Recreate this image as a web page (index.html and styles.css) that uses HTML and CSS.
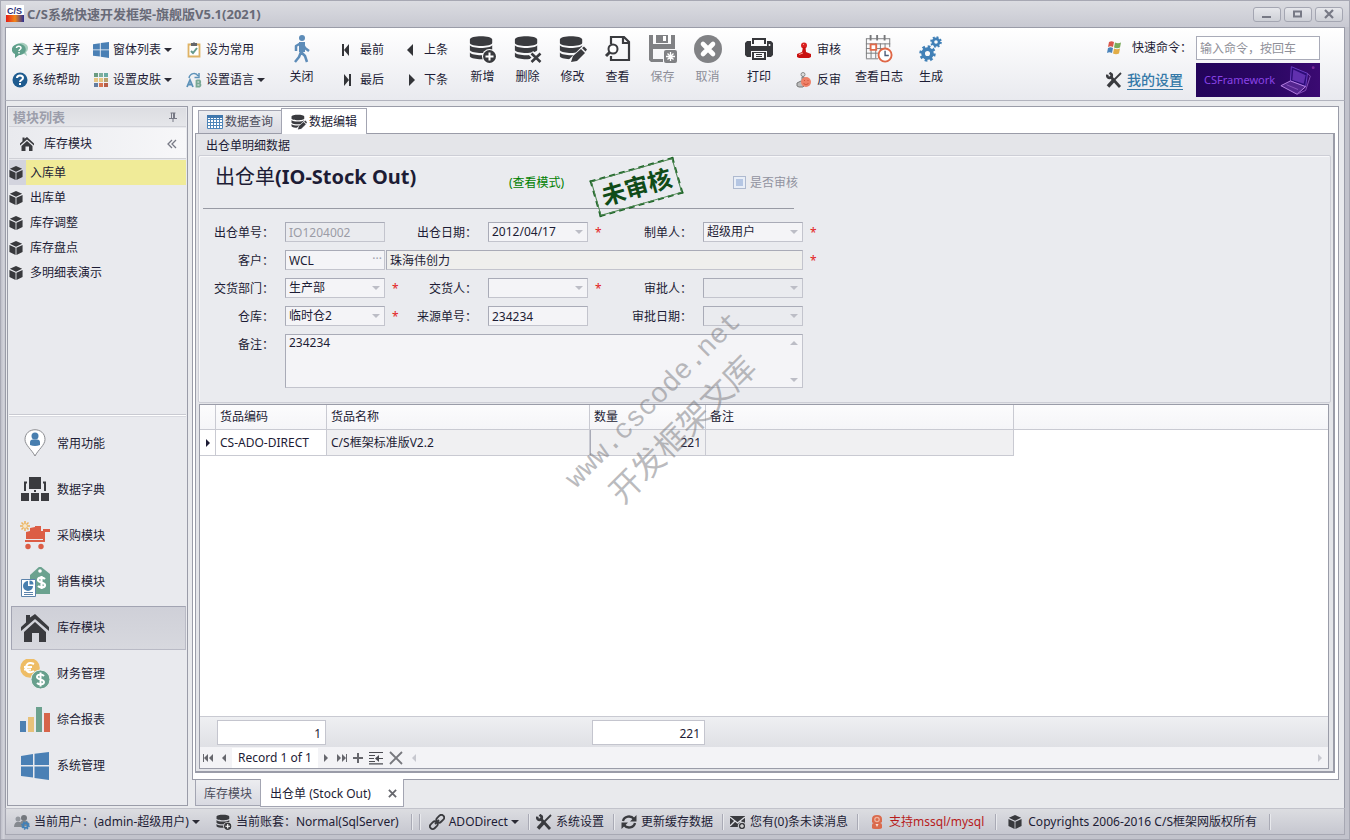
FILE: index.html
```html
<!DOCTYPE html>
<html lang="zh-CN">
<head>
<meta charset="utf-8">
<title>C/S系统快速开发框架-旗舰版V5.1(2021)</title>
<link rel="stylesheet" href="styles.css">
</head>
<body>
<svg class="sprite" aria-hidden="true">
  <symbol id="i-db" viewBox="0 0 28 28"><path fill="#3a3b3f" d="M1 4.500C1 -.5 26 -.5 26 4.500v4C26 13 1 13 1 8.500zM1 11c3 4 22 4 25 0v5.500c-3 4-22 4-25 0zM1 19c3 4 22 4 25 0v4.500c-3 4-22 4-25 0z"/></symbol>
  <symbol id="i-add" viewBox="0 0 28 28"><use href="#i-db" width="25" height="26"/><circle cx="20.500" cy="21.500" r="7.500" fill="#fff"/><circle cx="20.500" cy="21.500" r="6.500" fill="#3a3b3f"/><path stroke="#fff" stroke-width="2" d="M16.500 21.500h8M20.500 17.500v8"/></symbol>
  <symbol id="i-del" viewBox="0 0 28 28"><use href="#i-db" width="25" height="26"/><path stroke="#f8f8fa" stroke-width="6" d="M17 18l9 9M26 18l-9 9"/><path stroke="#3a3b3f" stroke-width="2.600" d="M17.500 18.500l9 8.500M26.500 18.500l-9 8.500"/></symbol>
  <symbol id="i-edit" viewBox="0 0 28 28"><use href="#i-db" width="25" height="26"/><path stroke="#f8f8fa" stroke-width="8" d="M11 29L28 12"/><path fill="#3a3b3f" d="M12 27l2-6 8-7 4 4-8 8zM23 13l2-1.500 3 3-1.500 2z"/></symbol>
  <symbol id="i-view" viewBox="0 0 28 28"><path fill="none" stroke="#3a3b3f" stroke-width="2.200" d="M7 9V2h13l5 5v18H7v-4M19 2v6h6"/><circle cx="9" cy="14" r="4.500" fill="#fff" stroke="#3a3b3f" stroke-width="2"/><path stroke="#3a3b3f" stroke-width="3" d="M6 17l-4 4"/></symbol>
  <symbol id="i-save" viewBox="0 0 28 28"><path fill="#808184" d="M0 0h4v9h18V0h4v14H4v10h10v3H2l-2-2zM7 0h12v8H7z"/><path fill="#fff" d="M14 1h3v5h-3z"/><rect x="15" y="15" width="13" height="13" rx="2" fill="#808184"/><path stroke="#fff" stroke-width="1.300" d="M21.500 17v9M17 21.500h9M18.500 18.500l6 6M24.500 18.500l-6 6"/></symbol>
  <symbol id="i-cancel" viewBox="0 0 28 28"><circle cx="14" cy="14" r="14" fill="#818285"/><path stroke="#fff" stroke-width="4.600" stroke-linecap="round" d="M9 9l10 10M19 9L9 19"/></symbol>
  <symbol id="i-print" viewBox="0 0 28 28"><path fill="#36373b" d="M0 8l2-2h4v5h16V6h4l2 2v12l-2 2h-4v-6H6v6H2l-2-2zM7 3h14v6h-2V5H9v4H7zM7 17h14v8H7zM9 18v5h10v-5z" fill-rule="evenodd"/><path stroke="#36373b" d="M11 19.500h6M11 21.500h6"/><circle cx="24.500" cy="10" r="1" fill="#fff"/></symbol>
  <symbol id="i-walk" viewBox="0 0 20 28"><circle cx="10" cy="3" r="3" fill="#5d8cb8"/><path fill="none" stroke="#5d8cb8" stroke-width="2.500" stroke-linejoin="round" d="M9 8l-5 3v5M10 8l3 5 4 3M9 8v9l4 4 2 6M9 17l-2 5-4 5"/><path fill="#5d8cb8" d="M7 7h6v10H7z"/></symbol>
  <symbol id="i-log" viewBox="0 0 30 30"><path fill="none" stroke="#77787b" d="M1.500 4v21M6.500 9v16M11.500 9v16M16.500 9v7M21.500 9v5M26.500 4v9M1 4h26M1 9.500h26M1 14.500h18M1 19.500h13M1 25.500h13"/><path stroke="#77787b" stroke-width="2" d="M6 0v6M13 0v6M21 0v6"/><path fill="#fff" stroke="#e06a4a" stroke-width="2" d="M6 10h6v6H6z"/><circle cx="21.500" cy="21.500" r="7" fill="#fff" stroke="#df6646" stroke-width="2"/><path fill="none" stroke="#4b5e7a" stroke-width="1.500" d="M21.500 17v5h4"/></symbol>
  <symbol id="i-gear" viewBox="0 0 20 20"><circle cx="10" cy="10" r="5.200" fill="none" stroke="#4180b7" stroke-width="4.400"/><circle cx="10" cy="10" r="8" fill="none" stroke="#4180b7" stroke-width="3.400" stroke-dasharray="3.140"/></symbol>
  <symbol id="i-gears" viewBox="0 0 24 28"><use href="#i-gear" x="0" y="10" width="17" height="17"/><use href="#i-gear" x="11" y="1" width="12" height="12"/></symbol>
  <symbol id="i-stamp" viewBox="0 0 16 16"><circle cx="8" cy="3.500" r="3" fill="#d92121"/><path fill="#c91111" d="M7 5h2.500l.5 5 5 2v3l-2 1H3l-2-1v-3l5-2z"/><path stroke="#ff9b8a" d="M3 12.500l4-1.500M7 2.500h1"/></symbol>
  <symbol id="i-unstamp" viewBox="0 0 16 16"><circle cx="7" cy="2.500" r="2" fill="#ddd" stroke="#8b8b8b"/><path fill="#bbb" stroke="#777" d="M6 5h2v4H6zM1 11l4-2 4 4-2 2H3l-2-1z"/><circle cx="10" cy="10" r="5" fill="#ee8067"/><path fill="none" stroke="#cf5037" d="M7.500 11c1 2 4 2 5 0M8 8.500h1M11.500 8.500h1"/></symbol>
  <symbol id="i-about" viewBox="0 0 16 16"><path fill="#a5cdbd" d="M4 3c3-4 12-2 12 3 0 3-2 4-2 4l1 4-4-3z"/><path fill="#5f9f8b" d="M7 2c9 0 9 11 0 11l-4 3V12C-3 9 0 2 7 2z"/><path fill="none" stroke="#fff" stroke-width="1.500" d="M4.500 6c0-2.500 4.500-2.500 4.500 0 0 1.500-2 1.500-2 3M7 10v1.500"/></symbol>
  <symbol id="i-help" viewBox="0 0 16 16"><circle cx="8" cy="8" r="7.500" fill="#1f5c90"/><path fill="none" stroke="#fff" stroke-width="2" d="M5 6c0-3.500 6-3.500 6 0 0 2-3 2-3 4M8 11v2"/></symbol>
  <symbol id="i-win" viewBox="0 0 28 28"><path fill="#4a80b5" d="M0 4l12-2v11H0zM13.500 1.800L28 0v13H13.500zM0 14.500h12v11L0 24zM13.500 14.500H28V28l-14.500-2z"/></symbol>
  <symbol id="i-skin" viewBox="0 0 16 16"><path fill="#6a9b80" d="M1 1h4v4H1z"/><path fill="#7eaf9d" d="M6 1h4v4H6z"/><path fill="#69aaa2" d="M11 1h4v4h-4z"/><path fill="#e5c581" d="M1 6h4v4H1zM6 6h4v4H6z"/><path fill="#b8a26c" d="M11 6h4v4h-4z"/><path fill="#627ca0" d="M1 11h4v4H1z"/><path fill="#d8734f" d="M6 11h4v4H6z"/><path fill="#b75e48" d="M11 11h4v4h-4z"/></symbol>
  <symbol id="i-clip" viewBox="0 0 16 16"><path fill="#fff" stroke="#dfb365" stroke-width="1.800" d="M2.500 2.500h11v12h-11z"/><path fill="#65666a" d="M5 1h2l1-1 1 1h2v3H5z"/><path fill="none" stroke="#65998c" stroke-width="2" d="M5 9l2 2 4-5"/></symbol>
  <symbol id="i-lang" viewBox="0 0 16 16"><path fill="none" stroke="#5c91b8" stroke-width="1.800" d="M1 15L4 8l3 7M2 12.500h4"/><path fill="none" stroke="#78a894" stroke-width="1.800" d="M10.500 8v6.500h3q2-1.500 0-3h-3M10.500 8.500h3q1.500 1.500 0 3"/><path fill="none" stroke="#5c91b8" stroke-width="1.500" d="M3 6c1-5 7-6 9-2M13 1v4.500H8.500"/></symbol>
  <symbol id="i-flag" viewBox="0 0 16 16"><path fill="#d9574b" d="M3 2c2-1 3-1 5 0L7 7C5 6 4 6 2 7z"/><path fill="#7aab5a" d="M9 2.500c2 1 4 1 6 0l-1 5c-2 1-4 1-6 0z"/><path fill="#4a83ba" d="M2 8c2-1 3-1 5 0l-1 5c-2-1-3-1-5 0z"/><path fill="#e2ad47" d="M8 8.500c2 1 4 1 6 0l-1 5c-2 1-4 1-6 0z"/></symbol>
  <symbol id="i-tools" viewBox="0 0 16 16"><path stroke="#3a3b3f" stroke-width="2.800" d="M4 4l10 11"/><path fill="none" stroke="#3a3b3f" stroke-width="2.600" d="M1.200 2.500c-.5 5 5.500 4.500 4.500 0L3.500.8"/><path stroke="#3a3b3f" stroke-width="1.800" d="M15 1L7 9"/><path stroke="#3a3b3f" stroke-width="3.500" d="M7.500 8.500L2 14.500"/></symbol>
  <symbol id="i-home" viewBox="0 0 28 28"><path fill="#3a3b3f" d="M5 6V1h4v2.500L14 0l14 13v4L14 5 0 17v-4l5-4.500zM3 18L14 8l11 10v10h-7v-9h-7v9H3z"/></symbol>
  <symbol id="i-cube" viewBox="0 0 16 16"><path fill="#38393d" d="M8 0l7 3-7 3.500L1 3zM.5 4.500l7 3.300V16l-7-3.500zM8.500 7.800l7-3.300v8l-7 3.500z"/></symbol>
  <symbol id="i-pin" viewBox="0 0 10 10"><path fill="none" stroke="#777985" d="M2.500 1h5M3.500 1v5M1 6.500h8M5 6v4"/><path fill="#777985" d="M5 1h2v5H5z"/></symbol>
  <symbol id="i-place" viewBox="0 0 30 30"><path fill="#fff" stroke="#8b8c90" d="M15 27C12 21 5 16 5 10.500c0-13 20-13 20 0C25 16 18 21 15 27z"/><circle cx="15" cy="7" r="3.500" fill="#487eaf"/><path fill="#487eaf" d="M10 16v-2.500q0-3 3-3h4q3 0 3 3V16q-5 2-10 0z"/></symbol>
  <symbol id="i-tree" viewBox="0 0 30 30"><path fill="#3a3b3f" d="M9 2h12v12H9zM1 18h8v8H1zM11 18h8v8h-8zM21 18h8v8h-8z"/><path fill="none" stroke="#3a3b3f" stroke-width="2" d="M7 7.500H5V16M23 7.500h2V16M15 15v2"/></symbol>
  <symbol id="i-cart" viewBox="0 0 30 30"><path fill="#dc5d45" d="M6 11l4-1V7l5-1V5h6v5h2V8h7v3h-5v10H5v-2h18v-1H6z"/><path stroke="#edb35b" stroke-width="1.500" d="M5 0v10M0 5h10M1.500 1.500l7 7M8.500 1.500l-7 7"/><circle cx="5" cy="5" r="2" fill="#f5e7cc"/><circle cx="8" cy="25.500" r="2.700" fill="#dc5d45"/><circle cx="21" cy="25.500" r="2.700" fill="#dc5d45"/></symbol>
  <symbol id="i-sale" viewBox="0 0 30 30"><path fill="#6ba28f" d="M10 8L20-1l10 8v20H10z"/><circle cx="20" cy="4" r="1.800" fill="#fff"/><path fill="none" stroke="#fff" stroke-width="2.200" d="M25 12c-2-2-7-2-7 1s7 2 7 5-5 3-7 1M21.500 9v13"/><path fill="#fff" stroke="#5c83ab" d="M1.500 12.500h14v17h-14z"/><path fill="#477eae" d="M8 14v5h5a5 5 0 1 1-5-5zM9.500 13.500q4 0 4 4h-4z"/><path stroke="#5c83ab" d="M4 25.500h9M4 27.500h9"/></symbol>
  <symbol id="i-coins" viewBox="0 0 30 30"><circle cx="10" cy="9" r="9.800" fill="#eebd66"/><path fill="none" stroke="#fff" stroke-width="2" d="M14 5c-6-3-8 1-8 4s3 6 8 3M4 8h8M4 10.500h7"/><circle cx="20.500" cy="20.500" r="9.500" fill="#68a08d" stroke="#edf0ef"/><path fill="none" stroke="#fff" stroke-width="2" d="M24 17c-2-2-7-2-7 1s7 2 7 5-5 3-7 1M20.500 13.500v14"/></symbol>
  <symbol id="i-bars" viewBox="0 0 30 30"><path fill="#4c80b2" d="M0 16h6v11H0z"/><path fill="#e7c17a" d="M8 12h6v15H8z"/><path fill="#6ba18e" d="M16 2h6v25h-6z"/><path fill="#d7654a" d="M24 8h6v19h-6z"/></symbol>
  <symbol id="i-table" viewBox="0 0 16 14"><path fill="#fff" stroke="#4f86b9" d="M.5.500h15v13H.5zM.5 4.500h15M.5 7.500h15M.5 10.500h15M3.500 3v10M6.500 3v10M9.500 3v10M12.500 3v10"/><path fill="#3f77ad" d="M0 0h16v3H0z"/></symbol>
  <symbol id="i-users" viewBox="0 0 16 16"><circle cx="4" cy="5" r="2.500" fill="#94989e"/><circle cx="10" cy="4" r="3" fill="#73777d"/><path fill="#85898f" d="M0 13c0-7 8-7 9 0zM6 9c1-4 9-3 9 1v2H8z"/><use href="#i-gear" x="7" y="7" width="9" height="9"/></symbol>
  <symbol id="i-link" viewBox="0 0 16 16"><g fill="none" stroke="#3a3b3f" stroke-width="1.800"><rect x="7" y="2" width="8.500" height="5.500" rx="2.700" transform="rotate(-45 11.200 4.700)"/><rect x=".5" y="8.500" width="8.500" height="5.500" rx="2.700" transform="rotate(-45 4.700 11.200)"/><path d="M6 10l4-4"/></g></symbol>
  <symbol id="i-refresh" viewBox="0 0 16 16"><path fill="none" stroke="#3a3b3f" stroke-width="2.300" d="M2 7c1-5 8-6 11-2M14 9c-1 5-8 6-11 2"/><path fill="#3a3b3f" d="M15.500 1v6.500H9zM.5 15V8.500H7z"/></symbol>
  <symbol id="i-mail" viewBox="0 0 16 16"><path fill="#3a3b3f" d="M0 2h15v11H0z"/><path fill="none" stroke="#dedfe4" stroke-width="1.300" d="M0 3l7.500 6L15 3M0 12l5-5M15 12l-5-5"/><circle cx="12" cy="12" r="3.800" fill="#3a3b3f" stroke="#dedfe4"/><path stroke="#fff" d="M10 12h4M12 10v4"/></symbol>
  <symbol id="i-person" viewBox="0 0 16 16"><path fill="#da6a4c" d="M3 5q0-4 5-4t5 4v3q-1 1-2 1 2 0 2 2v3q-1 1-3 1H6q-3 0-3-1v-3q0-2 2-2-2 0-2-1z"/><circle cx="8" cy="5.500" r="2.800" fill="#f0b49f"/><circle cx="8" cy="5.500" r="1.500" fill="#da6a4c"/><path fill="#f8ddd2" d="M6.500 10h3L8 13z"/></symbol>
</svg>
<div class="window">
  <header class="titlebar">
    <svg class="logo" viewBox="0 0 18 18"><path fill="#fff" d="M0 0h18v10H0z"/><path fill="url(#lg)" d="M0 10h18v7H0z"/><defs><linearGradient id="lg"><stop stop-color="#e51c16"/><stop offset=".5" stop-color="#f28618"/><stop offset="1" stop-color="#272f96"/></linearGradient></defs><text x="1" y="9" class="logo-text">C/S</text></svg>
    <h1 class="app-title">C/S系统快速开发框架-旗舰版V5.1(2021)</h1>
    <div class="win-buttons">
      <button type="button" aria-label="最小化"><svg viewBox="0 0 12 10"><path stroke="#777985" stroke-width="2" d="M1 8h9"/></svg></button>
      <button type="button" aria-label="最大化"><svg viewBox="0 0 12 10"><path fill="none" stroke="#777985" stroke-width="2" d="M2 2.500h7v5H2z"/></svg></button>
      <button type="button" aria-label="关闭窗口"><svg viewBox="0 0 12 10"><path stroke="#777985" stroke-width="2.200" d="M2 1l8 8M10 1L2 9"/></svg></button>
    </div>
  </header>

  <nav class="ribbon">
    <div class="pair pair-a">
      <button type="button"><svg class="ico16"><use href="#i-about"/></svg>关于程序</button>
      <button type="button"><svg class="ico16"><use href="#i-help"/></svg>系统帮助</button>
    </div>
    <div class="pair pair-b">
      <button type="button"><svg class="ico16"><use href="#i-win"/></svg>窗体列表<i class="caret"></i></button>
      <button type="button"><svg class="ico16"><use href="#i-skin"/></svg>设置皮肤<i class="caret"></i></button>
    </div>
    <div class="pair pair-b">
      <button type="button"><svg class="ico16"><use href="#i-clip"/></svg>设为常用</button>
      <button type="button"><svg class="ico16"><use href="#i-lang"/></svg>设置语言<i class="caret"></i></button>
    </div>
    <button type="button" class="big"><svg class="ico28"><use href="#i-walk"/></svg>关闭</button>
    <div class="pair pair-nav">
      <button type="button"><svg class="ico12" viewBox="0 0 12 12"><path fill="#333438" d="M1 0h2v12H1zM8 0v12L3 6z"/></svg>最前</button>
      <button type="button"><svg class="ico12" viewBox="0 0 12 12"><path fill="#333438" d="M8 0h2v12H8zM3 0v12l5-6z"/></svg>最后</button>
    </div>
    <div class="pair pair-step">
      <button type="button"><svg class="ico12" viewBox="0 0 12 12"><path fill="#333438" d="M8 0v12L2 6z"/></svg>上条</button>
      <button type="button"><svg class="ico12" viewBox="0 0 12 12"><path fill="#333438" d="M4 0v12l6-6z"/></svg>下条</button>
    </div>
    <button type="button" class="big"><svg class="ico28"><use href="#i-add"/></svg>新增</button>
    <button type="button" class="big"><svg class="ico28"><use href="#i-del"/></svg>删除</button>
    <button type="button" class="big"><svg class="ico28"><use href="#i-edit"/></svg>修改</button>
    <button type="button" class="big"><svg class="ico28"><use href="#i-view"/></svg>查看</button>
    <button type="button" class="big" disabled><svg class="ico28"><use href="#i-save"/></svg>保存</button>
    <button type="button" class="big" disabled><svg class="ico28"><use href="#i-cancel"/></svg>取消</button>
    <button type="button" class="big print"><svg class="ico28"><use href="#i-print"/></svg>打印</button>
    <div class="pair pair-audit">
      <button type="button"><svg class="ico16"><use href="#i-stamp"/></svg>审核</button>
      <button type="button"><svg class="ico16"><use href="#i-unstamp"/></svg>反审</button>
    </div>
    <button type="button" class="big log"><svg class="ico28"><use href="#i-log"/></svg>查看日志</button>
    <button type="button" class="big gen"><svg class="ico28"><use href="#i-gears"/></svg>生成</button>
    <div class="quick">
      <svg class="ico16"><use href="#i-flag"/></svg>
      <label for="cmd">快速命令：</label>
      <input id="cmd" type="text" placeholder="输入命令，按回车">
      <svg class="ico16"><use href="#i-tools"/></svg>
      <a href="#settings">我的设置</a>
      <div class="banner"><span>CSFramework</span>
        <svg viewBox="0 0 40 34"><path fill="#2d0c78" stroke="#6c3fc4" d="M13 3l17 7-2 14-16-6z"/><path fill="#6130ae" d="M15 6l13 6-2 9-12-4z"/><path fill="#54268f" stroke="#bb84e6" d="M12 18l16 6-9 8L2 23z"/><path stroke="#8751bb" d="M8 22l12 5"/><path fill="none" stroke="#8751bb" d="M30 10l3 3-5 15-9 4"/><circle cx="36" cy="4" r="1.500" fill="#782b98"/></svg>
      </div>
    </div>
  </nav>

  <div class="main">
    <aside class="sidebar">
      <h2 class="side-title">模块列表<svg class="pin"><use href="#i-pin"/></svg></h2>
      <div class="side-head"><svg><use href="#i-home"/></svg><span>库存模块</span><svg class="fold" viewBox="0 0 10 10"><path fill="none" stroke="#777985" stroke-width="1.300" d="M5 1L1 5l4 4M9 1L5 5l4 4"/></svg></div>
      <ul class="side-list">
        <li class="on"><a href="#in"><svg class="ico14"><use href="#i-cube"/></svg><span>入库单</span></a></li>
        <li><a href="#out"><svg class="ico14"><use href="#i-cube"/></svg><span>出库单</span></a></li>
        <li><a href="#adj"><svg class="ico14"><use href="#i-cube"/></svg><span>库存调整</span></a></li>
        <li><a href="#check"><svg class="ico14"><use href="#i-cube"/></svg><span>库存盘点</span></a></li>
        <li><a href="#demo"><svg class="ico14"><use href="#i-cube"/></svg><span>多明细表演示</span></a></li>
      </ul>
      <div class="side-nav">
        <button type="button"><svg><use href="#i-place"/></svg>常用功能</button>
        <button type="button"><svg><use href="#i-tree"/></svg>数据字典</button>
        <button type="button"><svg><use href="#i-cart"/></svg>采购模块</button>
        <button type="button"><svg><use href="#i-sale"/></svg>销售模块</button>
        <button type="button" class="on"><svg class="inset"><use href="#i-home"/></svg>库存模块</button>
        <button type="button"><svg><use href="#i-coins"/></svg>财务管理</button>
        <button type="button"><svg><use href="#i-bars"/></svg>综合报表</button>
        <button type="button"><svg class="inset"><use href="#i-win"/></svg>系统管理</button>
      </div>
    </aside>

    <div class="work">
      <div class="doc">
        <div class="tabs">
          <button type="button"><svg class="ico16"><use href="#i-table"/></svg>数据查询</button>
          <button type="button" class="on"><svg class="ico16"><use href="#i-edit"/></svg>数据编辑</button>
        </div>
        <section class="panel">
          <h2 class="caption">出仓单明细数据</h2>
          <form class="form">
            <div class="form-head">
              <h2><span>出仓单</span>(IO-Stock Out)</h2>
              <span class="mode">(查看模式)</span>
              <label class="audited"><input type="checkbox" disabled>是否审核</label>
              <div class="stamp">未审核</div>
            </div>
            <div class="fields">
              <label for="f1">出仓单号：</label><input id="f1" value="IO1204002" disabled><span></span>
              <label for="f2">出仓日期：</label><div class="combo"><select id="f2"><option>2012/04/17</option></select></div><span class="req">*</span>
              <label for="f3">制单人：</label><div class="combo"><select id="f3"><option>超级用户</option></select></div><span class="req">*</span>

              <label for="f4">客户：</label><div class="dots"><input id="f4" value="WCL"></div>
              <input class="wide" aria-label="客户名称" value="珠海伟创力" readonly><span class="req">*</span>

              <label for="f5">交货部门：</label><div class="combo"><select id="f5"><option>生产部</option></select></div><span class="req">*</span>
              <label for="f6">交货人：</label><div class="combo"><select id="f6"><option></option></select></div><span class="req">*</span>
              <label for="f7">审批人：</label><div class="combo"><select id="f7" disabled><option></option></select></div><span></span>

              <label for="f8">仓库：</label><div class="combo"><select id="f8"><option>临时仓2</option></select></div><span class="req">*</span>
              <label for="f9">来源单号：</label><input id="f9" value="234234"><span></span>
              <label for="f10">审批日期：</label><div class="combo"><select id="f10" disabled><option></option></select></div><span></span>

              <label for="f11">备注：</label><div class="memo"><textarea id="f11">234234</textarea></div>
            </div>
          </form>

          <div class="grid">
            <div class="grid-body">
              <table>
                <colgroup><col class="c0"><col class="c1"><col class="c2"><col class="c3"><col class="c4"><col></colgroup>
                <thead><tr><th></th><th>货品编码</th><th>货品名称</th><th>数量</th><th>备注</th><th></th></tr></thead>
                <tbody><tr><td><i class="rowmark"></i></td><td>CS-ADO-DIRECT</td><td class="g">C/S框架标准版V2.2</td><td class="g num">221</td><td class="g"></td><td class="fill"></td></tr></tbody>
              </table>
            </div>
            <div class="summary"><output class="s1">1</output><output class="s2">221</output></div>
            <div class="navigator">
              <button type="button" aria-label="首条"><svg viewBox="0 0 12 12"><path fill="#66676d" d="M1 2h1v8H1zM6 2v8L2 6zM11 2v8L7 6z"/></svg></button>
              <button type="button" aria-label="上一条"><svg viewBox="0 0 12 12"><path fill="#66676d" d="M8 2v8L4 6z"/></svg></button>
              <span>Record 1 of 1</span>
              <button type="button" aria-label="下一条"><svg viewBox="0 0 12 12"><path fill="#66676d" d="M4 2v8l4-4z"/></svg></button>
              <button type="button" aria-label="末条"><svg viewBox="0 0 12 12"><path fill="#66676d" d="M10 2h1v8h-1zM1 2v8l4-4zM6 2v8l4-4z"/></svg></button>
              <button type="button" aria-label="追加"><svg viewBox="0 0 12 12"><path stroke="#66676d" stroke-width="2" d="M1 6h10M6 1v10"/></svg></button>
              <button type="button" class="w" aria-label="插入"><svg viewBox="0 0 16 14"><path stroke="#4b4c52" stroke-width="1.200" d="M1 1.500h14M1 4.500h6M1 7.500h5M1 10.500h6M1 12.800h14M9 7.500h6"/><path fill="#4b4c52" d="M11 4v7L7 7.500z"/></svg></button>
              <button type="button" class="w" aria-label="删除行"><svg viewBox="0 0 16 14"><path stroke="#77787d" stroke-width="1.800" d="M2 1l12 12M14 1L2 13"/></svg></button>
              <i class="sb l"></i><i class="sb r"></i>
            </div>
          </div>
        </section>
        <div class="watermark"><span class="site">www.cscode.net</span><span>开发框架文库</span></div>
      </div>
      <div class="doc-tabs">
        <button type="button">库存模块</button>
        <button type="button" class="on">出仓单 (Stock Out)<svg viewBox="0 0 10 10"><path stroke="#66676d" stroke-width="2" d="M1 1l8 8M9 1L1 9"/></svg></button>
      </div>
    </div>
  </div>

  <footer class="status">
    <button type="button" class="st-user"><svg class="ico16"><use href="#i-users"/></svg>当前用户：(admin-超级用户)<i class="caret"></i></button>
    <span class="st-db"><svg class="ico16"><use href="#i-add"/></svg>当前账套：Normal(SqlServer)</span>
    <span class="sep bare"></span>
    <button type="button" class="sep next"><svg class="ico16"><use href="#i-link"/></svg>ADODirect<i class="caret"></i></button>
    <button type="button" class="sep"><svg class="ico16"><use href="#i-tools"/></svg>系统设置</button>
    <button type="button" class="sep"><svg class="ico16"><use href="#i-refresh"/></svg>更新缓存数据</button>
    <button type="button" class="sep"><svg class="ico16"><use href="#i-mail"/></svg>您有(0)条未读消息</button>
    <span class="sep red"><svg class="ico16"><use href="#i-person"/></svg>支持mssql/mysql</span>
    <span class="sep copy"><svg class="ico14"><use href="#i-cube"/></svg>Copyrights 2006-2016 C/S框架网版权所有</span>
    <span class="sep bare"></span>
  </footer>
</div>
</body>
</html>
```

FILE: styles.css
```css
* { box-sizing: border-box; }
body {
  margin: 0;
  color: #1d1c35;
  font: 12px/16px "Noto Sans", "Noto Sans CJK SC", sans-serif;
  background: #e9eaed;
}
button, input, select, textarea { font: inherit; color: inherit; }
button { display: flex; align-items: center; padding: 0; border: 0; background: none; white-space: nowrap; }
h1, h2, ul { margin: 0; padding: 0; list-style: none; font-size: 12px; font-weight: normal; }
svg { display: block; flex: none; }
a { color: inherit; text-decoration: none; }
.sprite { position: absolute; width: 0; height: 0; }
.ico12 { width: 12px; height: 12px; }
.ico14 { width: 14px; height: 14px; }
.ico16 { width: 16px; height: 16px; }
.ico28 { width: 28px; height: 28px; }
.caret { width: 0; border: 4px solid transparent; border-top-color: #2b2b35; border-bottom: 0; }

.window {
  display: flex;
  flex-direction: column;
  min-height: 100vh;
  padding: 0 4px 4px;
  background: linear-gradient(90deg, #bfc0ca 0, #d4d5dc 3px, #c2c3cc 4px);
  border: 1px solid #a7a8b3;
}

/* title bar */
.titlebar {
  display: flex;
  align-items: center;
  gap: 3px;
  height: 26px;
  margin: 0 -4px;
  padding: 0 6px 0 5px;
  background: linear-gradient(#dbdce1, #c8c9d2);
}
.logo { width: 18px; height: 18px; }
.logo-text { font: bold 9px "Liberation Sans", sans-serif; fill: #2c3177; }
.app-title { flex: 1; color: #686a77; font-size: 13px; font-weight: bold; }
.win-buttons { display: flex; gap: 3px; }
.win-buttons button {
  justify-content: center;
  width: 28px;
  height: 15px;
  border: 1px solid #a4a6b2;
  border-radius: 3px;
  background: linear-gradient(#e6e7eb, #ced0d7);
}
.win-buttons svg { width: 12px; height: 10px; }

/* ribbon */
.ribbon {
  display: flex;
  height: 74px;
  padding: 7px 24px 0 6px;
  border: 1px solid #9a9ca8;
  border-bottom-color: #b2b4be;
  background: linear-gradient(#fff, #e9eaef);
}
.pair { display: flex; flex-direction: column; flex: none; }
.pair button { height: 30px; gap: 4px; }
.pair .caret { margin-left: -1px; }
.pair-a { width: 81px; }
.pair-b { width: 93px; }
.pair-nav { width: 81px; padding-left: 17px; }
.pair-nav button, .pair-step button { gap: 7px; }
.pair-step { width: 55px; }
.pair-audit { width: 58px; padding-left: 8px; }
.pair-audit button { gap: 5px; }
.big { flex: none; flex-direction: column; width: 45px; height: 52px; gap: 6px; }
.big:disabled { color: #8d8e97; }
.print { width: 58px; }
.log { width: 66px; }
.gen { width: 38px; }
.quick {
  display: grid;
  grid-template-columns: 21px 69px 124px;
  grid-template-rows: 26px 34px;
  gap: 2px 0;
  align-items: center;
  margin-left: auto;
}
.quick label { padding-left: 5px; }
.quick input { width: 100%; height: 24px; padding: 0 3px; border: 1px solid #a9abb8; background: #fff; }
.quick input::placeholder { color: #8f9099; opacity: 1; }
.quick a { justify-self: start; color: #3579a8; font-size: 14px; font-weight: 500; line-height: 18px; border-bottom: 1px solid #3579a8; }
.banner { display: flex; align-items: center; justify-content: space-between; height: 34px; padding: 0 3px 0 8px; color: #8a43e6; font-size: 11px; background: linear-gradient(90deg, #23045a, #2b0763 60%, #3b0a72); }
.banner svg { width: 38px; height: 34px; }

/* layout */
.main { display: flex; flex: 1; gap: 4px; padding: 5px 5px 2px 1px; background: #e9eaed; border: 1px solid #9a9ca8; border-width: 0 1px; }
.sidebar { display: flex; flex-direction: column; flex: none; width: 181px; padding: 1px; background: #e9eaee; border: 1px solid #9a9ca8; }
.side-title { display: flex; align-items: center; justify-content: space-between; height: 19px; padding: 0 8px 0 4px; color: #9c9eab; font-size: 13px; font-weight: bold; background: linear-gradient(#dcdde2, #e5e6ea); border-bottom: 1px solid #d2d3d9; }
.pin { width: 10px; height: 10px; }
.side-head { display: flex; align-items: center; gap: 10px; height: 31px; margin-top: 1px; padding: 1px 9px 0 11px; background: linear-gradient(90deg, #e9eaee, #f7f7f9); border-bottom: 1px solid #cfd0d6; }
.side-head svg { width: 14px; height: 14px; }
.side-head span { flex: 1; }
.side-head .fold { width: 10px; height: 10px; }
.side-list { flex: 1; padding-top: 1px; }
.side-list a { display: flex; align-items: center; height: 25px; }
.side-list svg { margin-right: 3px; }
.side-list span { flex: 1; padding-left: 4px; line-height: 25px; }
.side-list .on a { background: #d3d4de; }
.side-list .on span { background: #f0eb98; }
.side-nav { padding: 6px 0 14px 2px; border-top: 1px solid #c9cad1; box-shadow: inset 0 1px #fff, inset 0 2px #d9dae0; }
.side-nav button { width: 100%; height: 44px; margin: 1px 0 2px; padding-left: 8px; gap: 7px; border: 1px solid transparent; }
.side-nav svg { width: 30px; height: 30px; }
.side-nav .inset { padding: 1px; }
.side-nav .on { background: linear-gradient(#cfd0d8, #d7d8de); border-color: #a2a4b2 #b9bac5 #b9bac5 #a2a4b2; }

.work { display: flex; flex: 1; flex-direction: column; min-width: 0; }
.doc { position: relative; display: flex; flex: 1; flex-direction: column; padding: 1px 3px 6px 2px; background: #fff; border: 1px solid #9a9ca8; }
.tabs { display: flex; align-items: flex-end; padding-left: 3px; }
.tabs button { height: 23px; padding: 0 8px; gap: 2px; color: #4b4c5b; border: 1px solid #a3a5b2; border-width: 1px 1px 0; background: linear-gradient(#ecedf0, #d8d9e1); }
.tabs .on { position: relative; height: 26px; margin-bottom: -1px; margin-left: -1px; padding: 0 9px; color: #1d1c35; background: #fff; }
.panel { display: flex; flex: 1; flex-direction: column; padding: 0 2px 2px; background: #e4e5e9; border: 1px solid #9a9ca8; border-width: 1px 2px 2px 1px; }
.caption { padding: 4px 8px 1px; line-height: 16px; }
.form { padding: 0 5px 14px 4px; background: #eaebef; border: 1px solid #cdced6; border-radius: 2px; box-shadow: inset 1px 1px #f8f8fa; }
.form-head { position: relative; display: grid; grid-template-columns: 306px 224px 1fr; align-items: center; max-width: 591px; height: 53px; padding-bottom: 6px; border-bottom: 1px solid #989aa4; }
.form-head h2 { padding: 0 0 4px 12px; font-size: 20px; font-weight: bold; line-height: 24px; white-space: nowrap; }
.form-head h2 span { font-weight: normal; }
.mode { padding-top: 7px; color: #008000; }
.audited { display: flex; align-items: center; gap: 4px; padding-top: 7px; color: #9293a0; white-space: nowrap; }
.audited input { appearance: none; width: 13px; height: 13px; margin: 0; border: 1px solid #aeb9cf; background: #b5c6e3; box-shadow: inset 0 0 0 2px #e9eef7; }
.stamp { position: absolute; left: 390px; top: 12px; width: 87px; height: 38px; color: #104c18; font-size: 24px; font-weight: bold; line-height: 34px; text-align: center; border: 2px dashed #1d6427; outline: 1px solid #4d8651; outline-offset: -2px; transform: rotate(-16deg); }
.fields { display: grid; grid-template-columns: 82px 100px 20px 83px 100px 20px 95px 100px 20px; grid-auto-rows: minmax(20px, auto); row-gap: 8px; padding-top: 13px; }
.fields label { padding: 2px 11px 0 0; line-height: 18px; text-align: right; white-space: nowrap; }
.fields input, .fields select, .fields textarea { display: block; width: 100%; height: 20px; margin: 0; padding: 0 3px; line-height: 18px; border: 1px solid #a9abb7; border-right-color: #c3c4cd; border-bottom-color: #c3c4cd; border-radius: 0; background: #f4f4f7; appearance: none; outline: 0; }
.fields input:disabled { color: #9b9ca6; background: #eaebef; }
.fields select:disabled { opacity: 1; background: #eaebef; }
.fields .wide { grid-column: 3 / 9; width: auto; margin-left: 1px; background: #efefed; }
.req { padding: 2px 0 0 7px; color: #e32222; line-height: 18px; }
.combo, .dots, .memo { position: relative; }
.combo::after { content: ""; position: absolute; top: 8px; right: 5px; border: 4px solid transparent; border-top-color: #bcbdc6; border-bottom: 0; }
.dots::after { content: "···"; position: absolute; top: 1px; right: 3px; color: #a0a1ac; }
.memo { grid-column: 2 / 9; }
.fields .memo textarea { height: 54px; line-height: 16px; resize: none; overflow: hidden; }
.memo::before, .memo::after { content: ""; position: absolute; right: 5px; border: 4px solid transparent; }
.memo::before { top: 7px; border-bottom-color: #bcbdc6; border-top: 0; }
.memo::after { bottom: 6px; border-top-color: #bcbdc6; border-bottom: 0; }

/* data grid */
.grid { display: flex; flex: 1; flex-direction: column; margin: 1px 2px 0 1px; border: 1px solid #9a9ca8; background: #fff; }
.grid-body { flex: 1; }
table { width: 100%; table-layout: fixed; border-collapse: separate; border-spacing: 0; }
.c0 { width: 16px; }
.c1 { width: 111px; }
.c2 { width: 263px; }
.c3 { width: 116px; }
.c4 { width: 308px; }
th, td { height: 25px; padding: 0 4px; font-weight: normal; text-align: left; white-space: nowrap; border-right: 1px solid #c9cad2; border-bottom: 1px solid #c9cad2; }
th { background: linear-gradient(#fcfcfd, #f5f5f8); }
th:last-child, td:last-child { border-right: 0; }
td { height: 26px; }
.g { background: #f0f0f2; }
.fill { border-bottom: 0; }
.num { text-align: right; border-left: 1px solid #a9abb7; }
.rowmark { display: block; width: 0; margin-left: 2px; border: 4px solid transparent; border-left-color: #1d1c35; border-right: 0; }
.summary { display: flex; height: 31px; padding: 3px 0 2px 17px; border-top: 1px solid #c9cad2; background: linear-gradient(#eeeff2, #dfe0e5); }
.summary output { padding: 5px 4px; text-align: right; line-height: 16px; background: #fff; border: 1px solid #c4c5ce; }
.s1 { width: 109px; }
.s2 { width: 113px; margin-left: 266px; }
.navigator { display: flex; align-items: center; height: 21px; background: #f3f3f6; }
.navigator span { padding: 0 6px; background: #fff; line-height: 20px; }
.navigator button { width: 16px; height: 20px; justify-content: center; }
.navigator svg { width: 12px; height: 12px; }
.navigator .w { width: 20px; }
.navigator .w svg { width: 16px; height: 14px; }
.sb { border: 4px solid transparent; }
.sb.l { margin-left: 6px; border-right-color: #c7c8cf; border-left: 0; }
.sb.r { margin: 0 6px 0 auto; border-left-color: #c7c8cf; border-right: 0; }

.watermark { position: absolute; left: 345px; top: 270px; width: 260px; color: rgba(120, 120, 125, .5); font: 32px/40px "Noto Sans CJK SC", sans-serif; text-align: center; transform: rotate(-45deg); pointer-events: none; }
.watermark span { display: block; }
.watermark .site { font: 28px/36px "Liberation Mono", monospace; }

.doc-tabs { display: flex; align-items: flex-start; height: 26px; padding-left: 3px; }
.doc-tabs button { height: 26px; padding: 2px 8px 0; color: #4b4c5b; border: 1px solid #a3a5b2; border-top: 0; background: linear-gradient(#ecedf0, #d8d9e1); }
.doc-tabs .on { position: relative; height: 28px; margin-top: -1px; margin-left: -1px; padding: 2px 6px 0 9px; gap: 17px; color: #1d1c35; background: #fff; }
.doc-tabs svg { width: 9px; height: 9px; }

/* status bar */
.status { display: flex; align-items: center; height: 27px; padding: 0 8px; background: linear-gradient(#dcdde1, #c6c7d0); border: 1px solid #a7a8b3; border-top-color: #c2c3cb; white-space: nowrap; }
.status > * { display: flex; align-items: center; gap: 4px; }
.status .caret { margin-left: -1px; }
.st-db { margin-left: 16px; }
.sep { position: relative; min-height: 16px; margin-left: 9px; padding-left: 8px; }
.sep::before { content: ""; position: absolute; left: 0; top: 0; width: 1px; height: 16px; background: #a9aab5; box-shadow: 1px 0 #e8e9ed; }
.status .bare { margin-left: 12px; padding-left: 0; }
.status .next { margin-left: 8px; padding-left: 10px; }
.status .red { color: #b71c1c; padding-left: 12px; }
.status .copy { margin-left: 11px; padding-left: 13px; gap: 6px; }
```
